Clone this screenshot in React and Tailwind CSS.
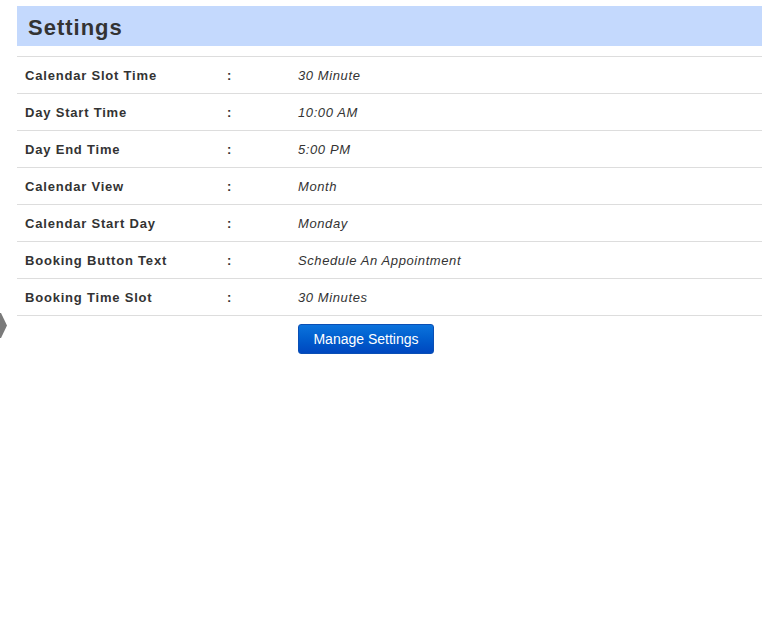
export default function App() {
  const rows = [
    ["Calendar Slot Time", "30 Minute"],
    ["Day Start Time", "10:00 AM"],
    ["Day End Time", "5:00 PM"],
    ["Calendar View", "Month"],
    ["Calendar Start Day", "Monday"],
    ["Booking Button Text", "Schedule An Appointment"],
    ["Booking Time Slot", "30 Minutes"],
  ];
  return (
    <div className="relative h-[632px] w-[763px] bg-white text-[#333]" style={{ fontFamily: '"Liberation Sans", Arial, sans-serif' }}>
      <svg className="absolute left-0 top-[313px]" width="7" height="25" viewBox="0 0 7 25">
        <polygon points="0,0 1,0 7,12.5 1,25 0,25" fill="#7a7a7a" />
      </svg>
      <div className="ml-[17px] mr-px pt-[6px]">
        <div className="flex h-[40px] items-center bg-[#c4d9fd] pl-[11px] pt-[2px]">
          <h1 className="text-[22px] font-bold tracking-[1px] text-[#333]">Settings</h1>
        </div>
        <div className="mt-[10px] border-t border-[#dddddd]">
          {rows.map(([label, value]) => (
            <div key={label} className="grid h-[37px] grid-cols-[202px_71px_1fr] items-center border-b border-[#dddddd] pt-[1px] text-[13px]">
              <div className="pl-2 font-bold tracking-[0.8px]">{label}</div>
              <div className="pl-2 font-bold">:</div>
              <div className="pl-2 italic tracking-[0.6px]">{value}</div>
            </div>
          ))}
          <div className="grid grid-cols-[202px_71px_1fr] pt-[8px]">
            <div />
            <div />
            <div className="pl-2">
              <button className="h-[30px] w-[136px] rounded-[3px] border border-[#0a4fb5] bg-gradient-to-b from-[#0c73dc] to-[#0047bf] text-[14px] text-white">
                Manage Settings
              </button>
            </div>
          </div>
        </div>
      </div>
    </div>
  );
}
